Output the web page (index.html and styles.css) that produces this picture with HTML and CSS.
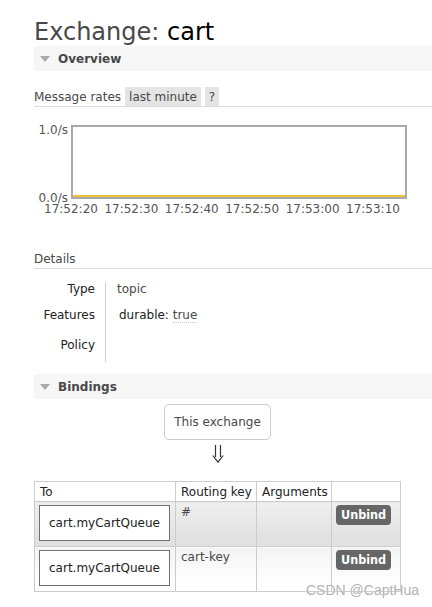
FILE: index.html
```
<!DOCTYPE html>
<html>
<head>
<meta charset="utf-8">
<link rel="stylesheet" href="styles.css">
</head>
<body>
<div class="page">
  <h1 class="title">Exchange: <span class="name">cart</span></h1>

  <div class="section-head"><span class="tri"></span>Overview</div>

  <div class="rates">
    <span class="rates-label">Message rates</span>
    <span class="pill">last minute</span>
    <span class="pill">?</span>
  </div>

  <div class="plot">
    <span class="ylab ylab-top">1.0/s</span>
    <span class="ylab ylab-bot">0.0/s</span>
    <div class="series"></div>
  </div>
  <div class="xlabels">
    <span>17:52:20</span><span>17:52:30</span><span>17:52:40</span><span>17:52:50</span><span>17:53:00</span><span>17:53:10</span>
  </div>

  <div class="sub">Details</div>

  <div class="facts">
    <div class="fk r1">Type</div><div class="fv r1">topic</div>
    <div class="fk r2">Features</div><div class="fv r2"><span class="feat">durable: <span class="abbr">true</span></span></div>
    <div class="fk r3">Policy</div><div class="fv r3"></div>
  </div>

  <div class="section-head bindings-head"><span class="tri"></span>Bindings</div>

  <div class="bind-wrap">
    <div class="this-ex">This exchange</div>
    <svg class="arrow" width="12" height="18" viewBox="0 0 12 18">
      <path d="M3.5 0 V12 M8.5 0 V12 M0.8 10.5 L6 17.2 L11.2 10.5" fill="none" stroke="#333" stroke-width="1.2"/>
    </svg>
    <table class="list">
      <colgroup><col class="c1"><col class="c2"><col class="c3"><col class="c4"></colgroup>
      <thead>
        <tr><th>To</th><th>Routing key</th><th>Arguments</th><th></th></tr>
      </thead>
      <tbody>
        <tr class="alt1">
          <td class="qcell"><div class="queue">cart.myCartQueue</div></td>
          <td>#</td>
          <td></td>
          <td class="bcell"><span class="btn">Unbind</span></td>
        </tr>
        <tr class="alt2">
          <td class="qcell"><div class="queue">cart.myCartQueue</div></td>
          <td>cart-key</td>
          <td></td>
          <td class="bcell"><span class="btn">Unbind</span></td>
        </tr>
      </tbody>
    </table>
  </div>
</div>
<div class="watermark">CSDN @CaptHua</div>
</body>
</html>
```
FILE: styles.css
```
html, body {
  margin: 0;
  padding: 0;
  background: #fff;
}
body {
  font-family: "DejaVu Sans", Verdana, sans-serif;
  font-size: 12px;
  line-height: 14px;
  color: #484848;
  position: relative;
  width: 432px;
  height: 607px;
  overflow: hidden;
}
.page {
  padding-left: 34px;
}
.title {
  margin: 19px 0 0 0;
  font-size: 24px;
  line-height: 27px;
  font-weight: normal;
  color: #484848;
}
.title .name {
  color: #000;
}
.section-head {
  display: flex;
  align-items: center;
  height: 25px;
  background: #f6f6f6;
  font-weight: bold;
  color: #484848;
}
.tri {
  width: 0;
  height: 0;
  border-left: 5.5px solid transparent;
  border-right: 5.5px solid transparent;
  border-top: 6px solid #aaa;
  margin-left: 6px;
  margin-right: 8px;
}
.rates {
  margin-top: 16px;
  display: flex;
  height: 19px;
  border-bottom: 1px solid #ddd;
}
.rates-label {
  padding-top: 1px;
  line-height: 18px;
  color: #484848;
  margin-right: 4px;
}
.pill {
  background: #e4e4e4;
  padding: 1px 4px 0;
  line-height: 18px;
  margin-right: 4px;
  color: #484848;
}
.plot {
  position: relative;
  margin: 18px 0 0 37px;
  width: 336px;
  height: 74px;
  box-sizing: border-box;
  border: 2px solid #a9a9a9;
}
.series {
  position: absolute;
  left: 0;
  right: 0;
  bottom: 0;
  height: 2px;
  background: #edc240;
}
.ylab {
  position: absolute;
  right: calc(100% + 5px);
  line-height: 10px;
  color: #545454;
  white-space: nowrap;
}
.ylab-top { top: -2px; }
.ylab-bot { top: 66px; }
.xlabels {
  display: flex;
  gap: 6.5px;
  margin: 5px 0 0 10px;
  line-height: 10px;
  color: #545454;
  white-space: nowrap;
}
.sub {
  margin-top: 38px;
  padding-bottom: 2px;
  border-bottom: 1px solid #ddd;
  color: #484848;
}
.facts {
  margin-top: 13px;
  display: grid;
  grid-template-columns: 71px 1fr;
}
.fk {
  text-align: right;
  padding-right: 10px;
  color: #222;
}
.fv {
  border-left: 1px solid #ccc;
  padding-left: 11px;
  color: #484848;
}
.r1 { height: 26px; }
.r2 { height: 30px; }
.r3 { height: 24px; }
.feat {
  padding-left: 2px;
  color: #222;
}
.abbr {
  color: #484848;
  border-bottom: 1px dotted #ccc;
}
.bindings-head {
  margin-top: 12px;
}
.bind-wrap {
  display: inline-block;
  margin-top: 5px;
}
.this-ex {
  width: fit-content;
  margin: 0 auto;
  border: 1px solid #ccc;
  border-radius: 5px;
  padding: 10px 9px;
  color: #484848;
}
.arrow {
  display: block;
  margin: 5px auto 0;
}
.list {
  margin-top: 18px;
  border-collapse: collapse;
  table-layout: fixed;
  width: 366px;
}
.c1 { width: 141px; }
.c2 { width: 81px; }
.c3 { width: 75px; }
.c4 { width: 69px; }
.list th, .list td {
  border: 1px solid #ccc;
  text-align: left;
  vertical-align: top;
  white-space: nowrap;
}
.list th {
  font-weight: normal;
  padding: 3px 4px 2px 5px;
  color: #222;
  background: #fff;
}
.list td {
  padding: 3px 5px 5px;
  color: #484848;
}
.list tr.alt1 td {
  background: linear-gradient(#efefef, #e1e1e1 85%, #e1e1e1);
}
.list tr.alt2 td {
  background: linear-gradient(#f3f3f3, #fff 85%, #fff);
}
.list td.qcell {
  padding-left: 4px;
  padding-right: 4px;
}
.list td.bcell {
  padding-left: 4px;
}
.queue {
  width: 131px;
  box-sizing: border-box;
  border: 1px solid #707070;
  background: #fff;
  padding: 10px 0;
  text-align: center;
  color: #222;
}
.btn {
  display: inline-block;
  height: 20px;
  line-height: 20px;
  padding: 0 5px;
  border-radius: 4px;
  background: #666;
  color: #fff;
  font-family: "DejaVu Sans Condensed", "DejaVu Sans", sans-serif;
  font-weight: bold;
  font-size: 12.5px;
}
.watermark {
  position: absolute;
  left: 306px;
  top: 582px;
  font-family: "Liberation Sans", Arial, sans-serif;
  font-size: 14px;
  line-height: 16px;
  color: #b2b2b2;
  text-shadow: 0 0 1px #fff;
  white-space: nowrap;
}
```
